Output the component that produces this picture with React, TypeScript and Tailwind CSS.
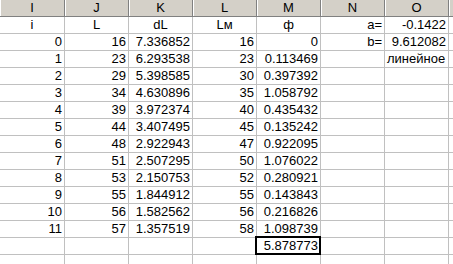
import React from "react";

const cols = ["I", "J", "K", "L", "M", "N", "O", ""];

const iv = [0, 1, 2, 3, 4, 5, 6, 7, 8, 9, 10, 11];
const L = [16, 23, 29, 34, 39, 44, 48, 51, 53, 55, 56, 57];
const dL = ["7.336852", "6.293538", "5.398585", "4.630896", "3.972374", "3.407495", "2.922943", "2.507295", "2.150753", "1.844912", "1.582562", "1.357519"];
const Lm = [16, 23, 30, 35, 40, 45, 47, 50, 52, 55, 56, 58];
const phi = ["0", "0.113469", "0.397392", "1.058792", "0.435432", "0.135242", "0.922095", "1.076022", "0.280921", "0.143843", "0.216826", "1.098739"];

type Cell = { t?: string; a?: "l" | "c" | "r"; sel?: boolean };

function rowsData(): Cell[][] {
  const rows: Cell[][] = [];
  rows.push([
    { t: "i", a: "c" },
    { t: "L", a: "c" },
    { t: "dL", a: "c" },
    { t: "Lм", a: "c" },
    { t: "ф", a: "c" },
    { t: "a=", a: "r" },
    { t: "-0.1422", a: "r" },
    {},
  ]);
  for (let k = 0; k < 12; k++) {
    const n: Cell = k === 0 ? { t: "b=", a: "r" } : {};
    const o: Cell =
      k === 0 ? { t: "9.612082", a: "r" } : k === 1 ? { t: "линейное", a: "l" } : {};
    rows.push([
      { t: String(iv[k]), a: "r" },
      { t: String(L[k]), a: "r" },
      { t: dL[k], a: "r" },
      { t: String(Lm[k]), a: "r" },
      { t: phi[k], a: "r" },
      n,
      o,
      {},
    ]);
  }
  rows.push([{}, {}, {}, {}, { t: "5.878773", a: "r", sel: true }, {}, {}, {}]);
  rows.push([{}, {}, {}, {}, {}, {}, {}, {}]);
  return rows;
}

export default function App() {
  const rows = rowsData();
  return (
    <div
      className="w-[453px] h-[264px] overflow-hidden bg-white text-black"
      style={{ fontFamily: '"Liberation Sans", Arial, sans-serif' }}
    >
      <div className="flex h-[17px] bg-[#d4d0c8] border-b border-[#808080]">
        {cols.map((c, i) => (
          <div
            key={i}
            className={`${i === 0 ? "w-[65px]" : "w-[64px]"} shrink-0 h-full border-r border-[#808080] flex items-center justify-center text-[13px] leading-[16px]`}
            style={{ boxShadow: "inset 1px 0 0 #ffffff" }}
          >
            {c}
          </div>
        ))}
      </div>
      {rows.map((r, ri) => (
        <div key={ri} className="flex h-[17px]">
          {r.map((c, ci) => (
            <div
              key={ci}
              className={`${ci === 0 ? "w-[65px]" : "w-[64px]"} relative shrink-0 h-full border-r border-b border-[#c0c0c0] px-[2px] text-[13px] leading-[16px] whitespace-nowrap ${
                c.a === "r" ? "text-right" : c.a === "c" ? "text-center" : "text-left"
              }`}
            >
              {c.t}
              {c.sel && (
                <div className="absolute -left-[2px] -top-[2px] -right-[1px] -bottom-[1px] border-[2px] border-black" />
              )}
            </div>
          ))}
        </div>
      ))}
    </div>
  );
}
